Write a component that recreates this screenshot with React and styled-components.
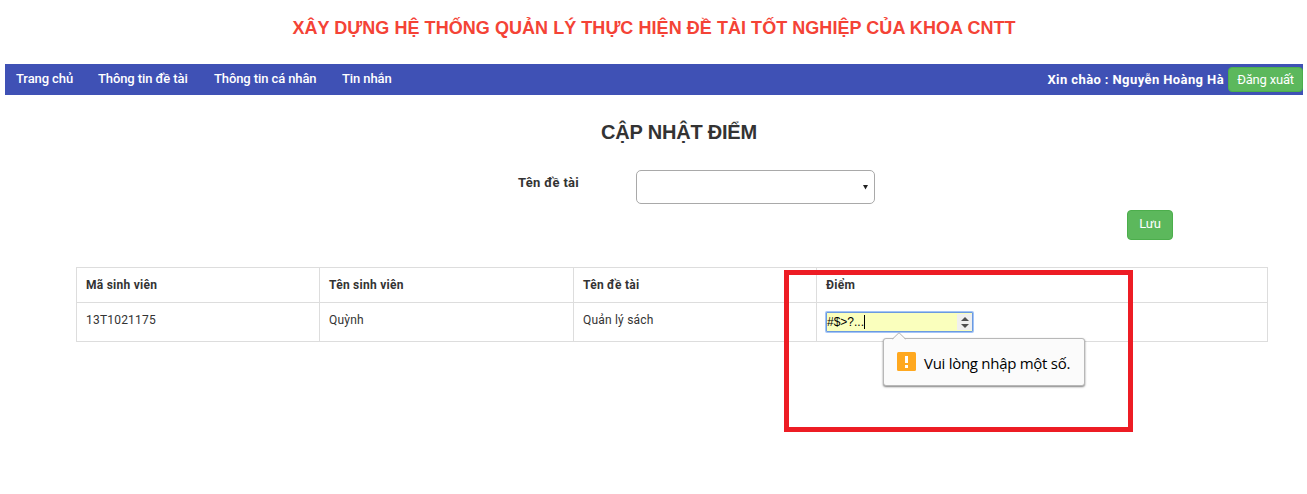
import React from "react";
import styled, { createGlobalStyle } from "styled-components";

const GlobalStyle = createGlobalStyle`
  * { box-sizing: border-box; }
  body {
    margin: 0;
    background: #fff;
    color: #333;
    font-family: Roboto, "Liberation Sans", sans-serif;
    font-size: 13px;
  }
`;

const Page = styled.div`
  position: relative;
  width: 1307px;
  height: 494px;
  padding: 0 4px 0 5px;
  overflow: hidden;
`;

const SiteTitle = styled.h1`
  margin: 0;
  height: 64px;
  padding-top: 16px;
  text-align: center;
  font: bold 18px/24px "Liberation Sans", Arial, sans-serif;
  letter-spacing: 0.05px;
  color: #f44336;
  white-space: nowrap;
`;

const NavBar = styled.nav`
  display: flex;
  justify-content: space-between;
  height: 31px;
  background: #3f51b5;
  color: #fff;
`;

const NavLinks = styled.div`
  display: flex;
  gap: 26px;
  padding-left: 11px;
`;

const NavLink = styled.a`
  width: ${(p) => p.$width}px;
  line-height: 30px;
  font-weight: 500;
  letter-spacing: -0.1px;
  white-space: nowrap;
`;

const UserArea = styled.div`
  display: flex;
  gap: 4px;
  padding-top: 3px;
`;

const Greeting = styled.span`
  font-weight: 700;
  line-height: 25px;
  letter-spacing: 0.4px;
`;

const Button = styled.button`
  width: ${(p) => p.$width}px;
  height: ${(p) => p.$height}px;
  padding: 0 0 ${(p) => p.$lift || 0}px;
  border: 1px solid #4cae4c;
  border-radius: 4px;
  background: #5cb85c;
  color: #fff;
  font: 400 13px Roboto, sans-serif;
  letter-spacing: -0.2px;
  white-space: nowrap;
`;

const Heading = styled.h2`
  margin: 23px 0 0 50px;
  text-align: center;
  font: bold 20px/28px "Liberation Sans", Arial, sans-serif;
  letter-spacing: -0.2px;
`;

const FormRow = styled.div`
  display: flex;
  margin: 24px 0 0 513px;
`;

const Label = styled.label`
  width: 118px;
  line-height: 25px;
  font-weight: 700;
  letter-spacing: 0.28px;
`;

const Select = styled.div`
  display: flex;
  align-items: center;
  justify-content: flex-end;
  width: 239px;
  height: 34px;
  padding-right: 6px;
  border: 1px solid #a9a9a9;
  border-radius: 5px;
`;

const Actions = styled.div`
  display: flex;
  justify-content: flex-end;
  padding: 6px 130px 0 0;
`;

const Table = styled.table`
  width: 1191px;
  margin: 27px 0 0 71px;
  border-collapse: collapse;
  table-layout: fixed;
  font-size: 12px;
`;

const Cell = styled.td`
  width: ${(p) => p.$width}px;
  height: ${(p) => p.$height}px;
  padding: 8px 8px 0 9px;
  border: 1px solid #ddd;
  vertical-align: top;
  text-align: left;
  line-height: 18px;
  font-weight: ${(p) => (p.$head ? 700 : 400)};
  letter-spacing: ${(p) => (p.$head ? 0.26 : 0.2)}px;
`;

const ScoreField = styled.div`
  position: relative;
  display: flex;
  align-items: center;
  justify-content: space-between;
  width: 147px;
  height: 20px;
  margin-top: 1px;
  border: 1px solid #6b9ae0;
  border-radius: 1px;
  box-shadow: 0 0 0 1px #a3c4f7;
  background: #faffbd;
  color: #000;
  font: 12px/16px "Liberation Sans", Arial, sans-serif;
  letter-spacing: 0;
`;

const Value = styled.span`
  height: 14px;
  border-right: 1px solid #000;
  line-height: 15px;
`;

const Spinner = styled.span`
  display: flex;
  align-items: center;
  justify-content: center;
  width: 15px;
  height: 16px;
  background: #f0f0f0;
`;

const Tooltip = styled.div`
  position: absolute;
  z-index: 2;
  top: 25px;
  left: 56px;
  display: flex;
  align-items: center;
  gap: 8px;
  width: 202px;
  height: 48px;
  padding: 0 0 0 13px;
  border: 1px solid #b8b8b8;
  border-radius: 3px;
  background: #fbfbfb;
  box-shadow: 0 1px 2px rgba(0, 0, 0, 0.5);
  font: 15px/20px "Open Sans", "Noto Sans", sans-serif;
  letter-spacing: -0.28px;
  white-space: nowrap;
`;

const Message = styled.span`
  padding-top: 1px;
`;

const Pointer = styled.svg`
  position: absolute;
  top: -7px;
  left: 8px;
`;

const Warning = styled.svg`
  flex: none;
  margin-top: -1px;
`;

const Highlight = styled.div`
  position: absolute;
  z-index: 1;
  top: 270px;
  left: 784px;
  width: 349px;
  height: 162px;
  border: 5px solid #ed1c24;
  pointer-events: none;
`;

const links = [
  ["Trang chủ", 56],
  ["Thông tin đề tài", 90],
  ["Thông tin cá nhân", 102],
  ["Tin nhắn", 50],
];

const columns = [
  ["Mã sinh viên", 243],
  ["Tên sinh viên", 254],
  ["Tên đề tài", 243],
  ["Điểm", 451],
];

export default function App() {
  return (
    <Page>
      <GlobalStyle />
      <SiteTitle>XÂY DỰNG HỆ THỐNG QUẢN LÝ THỰC HIỆN ĐỀ TÀI TỐT NGHIỆP CỦA KHOA CNTT</SiteTitle>
      <NavBar>
        <NavLinks>
          {links.map(([text, width]) => (
            <NavLink key={text} $width={width}>{text}</NavLink>
          ))}
        </NavLinks>
        <UserArea>
          <Greeting>Xin chào : Nguyễn Hoàng Hà</Greeting>
          <Button $width={75} $height={25}>Đăng xuất</Button>
        </UserArea>
      </NavBar>
      <Heading>CẬP NHẬT ĐIỂM</Heading>
      <FormRow>
        <Label>Tên đề tài</Label>
        <Select>
          <svg width="5" height="6" viewBox="0 0 5 6"><path d="M0 1h5L2.5 5.5z" fill="#222" /></svg>
        </Select>
      </FormRow>
      <Actions>
        <Button $width={46} $height={30} $lift={3}>Lưu</Button>
      </Actions>
      <Table>
        <thead>
          <tr>
            {columns.map(([text, width]) => (
              <Cell as="th" key={text} $head $width={width} $height={35}>{text}</Cell>
            ))}
          </tr>
        </thead>
        <tbody>
          <tr>
            <Cell $height={39}>13T1021175</Cell>
            <Cell>Quỳnh</Cell>
            <Cell>Quản lý sách</Cell>
            <Cell>
              <ScoreField>
                <Value>#$&gt;?...</Value>
                <Spinner>
                  <svg width="8" height="12" viewBox="0 0 8 12">
                    <path d="M0 5L4 1l4 4zM0 8h8l-4 4z" fill="#505050" />
                  </svg>
                </Spinner>
                <Tooltip>
                  <Pointer width="14" height="8" viewBox="0 0 14 8">
                    <path d="M1 7L7 1l6 6v1H1z" fill="#fbfbfb" />
                    <path d="M.5 7L7 .7 13.5 7" fill="none" stroke="#b0b0b0" />
                  </Pointer>
                  <Warning width="19" height="19" viewBox="0 0 19 19">
                    <rect width="19" height="19" rx="1.5" fill="#ffa81f" />
                    <path d="M8 4h3v7H8zM8 13h3v3H8z" fill="#fff" />
                  </Warning>
                  <Message>Vui lòng nhập một số.</Message>
                </Tooltip>
              </ScoreField>
            </Cell>
          </tr>
        </tbody>
      </Table>
      <Highlight />
    </Page>
  );
}
